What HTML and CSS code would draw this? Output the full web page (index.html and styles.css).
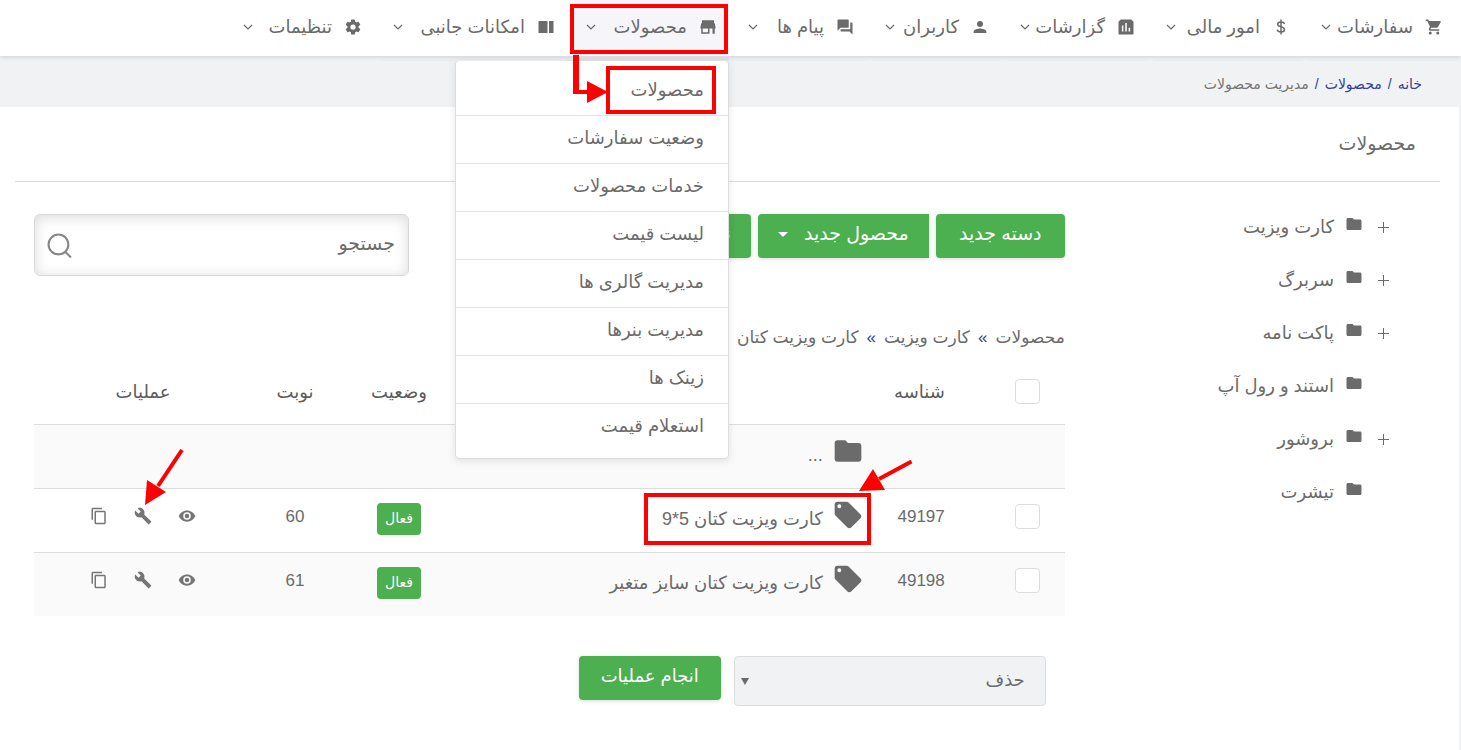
FILE: index.html
```html
<!DOCTYPE html>
<html lang="fa" dir="rtl">
<head>
<meta charset="utf-8">
<meta name="viewport" content="width=device-width, initial-scale=1">
<title>مدیریت محصولات</title>
<link rel="stylesheet" href="styles.css">
</head>
<body>
<svg class="sprite" aria-hidden="true">
  <symbol id="i-cart" viewBox="0 0 24 24"><path d="M7 18a2 2 0 1 0 0 4 2 2 0 0 0 0-4zM17 18a2 2 0 1 0 0 4 2 2 0 0 0 0-4zM7.200 14.600l.9-1.600h7.450c.75 0 1.400-.4 1.750-1l3.600-6.500A1 1 0 0 0 20 4H5.200l-.9-2H1v2h2l3.600 7.600-1.350 2.400C4.500 15.400 5.500 17 7 17h12v-2H7.400z"/></symbol>
  <symbol id="i-dollar" viewBox="0 0 24 24"><path d="M12 2v20M16.500 8c-.3-1.800-2-2.800-4.500-2.800S7.500 6.400 7.500 8.300c0 4.200 9.200 2.700 9.200 7.100 0 2-1.900 3.300-4.700 3.300s-4.700-1.200-5-3.200" fill="none" stroke="currentColor" stroke-width="2"/></symbol>
  <symbol id="i-chart" viewBox="0 0 24 24"><path fill-rule="evenodd" d="M5 2h14l3 3v16a1 1 0 0 1-1 1H3a1 1 0 0 1-1-1V5zM6.500 10v8h2v-8zM11 6.500V18h2V6.500zM15.500 13v5h2v-5z"/></symbol>
  <symbol id="i-user" viewBox="0 0 24 24"><path d="M12 12a4 4 0 1 0 0-8 4 4 0 0 0 0 8zm0 2c-3 0-8.500 1.300-8.500 4.500V20h17v-1.500C20.500 15.300 15 14 12 14z"/></symbol>
  <symbol id="i-chat" viewBox="0 0 24 24"><path d="M21 6h-2v9H6v2c0 .55.45 1 1 1h11l4 4V7c0-.55-.45-1-1-1zm-4 6V3c0-.55-.45-1-1-1H3c-.55 0-1 .45-1 1v14l4-4h10c.55 0 1-.45 1-1z"/></symbol>
  <symbol id="i-store" viewBox="0 0 24 24"><path d="M20 3H4v4h16V3zm2 11v-2l-1-5H3l-1 5v2h1v7h11v-7h4v7h3v-7h1zm-10 5H5v-5h7v5z"/></symbol>
  <symbol id="i-columns" viewBox="0 0 24 24"><path d="M2 4h12v16H2zM16 4h6v16h-6z"/></symbol>
  <symbol id="i-gear" viewBox="0 0 24 24"><path d="M19.430 12.980c.04-.32.070-.64.070-.98s-.03-.66-.07-.98l2.110-1.650c.19-.15.240-.42.120-.64l-2-3.460c-.12-.22-.39-.3-.61-.22l-2.490 1c-.52-.4-1.080-.73-1.690-.98l-.38-2.650C14.460 2.180 14.250 2 14 2h-4c-.25 0-.46.18-.49.42l-.38 2.650c-.61.25-1.170.59-1.690.98l-2.490-1c-.23-.09-.49 0-.61.22l-2 3.460c-.13.22-.07.49.12.64l2.110 1.650c-.04.32-.07.65-.07.98s.03.66.07.98l-2.110 1.650c-.19.15-.24.42-.12.64l2 3.460c.12.22.39.3.61.22l2.490-1c.52.4 1.080.73 1.690.98l.38 2.650c.03.24.24.42.49.42h4c.25 0 .46-.18.49-.42l.38-2.650c.61-.25 1.170-.59 1.690-.98l2.490 1c.23.09.49 0 .61-.22l2-3.460c.12-.22.07-.49-.12-.64l-2.110-1.650zM12 15.500a3.500 3.500 0 1 1 0-7 3.500 3.500 0 0 1 0 7z"/></symbol>
  <symbol id="i-chevron" viewBox="0 0 10 10"><path d="M1 3l4 4 4-4" fill="none" stroke="currentColor" stroke-width="1.200"/></symbol>
  <symbol id="i-folder" viewBox="0 0 24 24"><path d="M10 4H4c-1.100 0-2 .9-2 2v12c0 1.100.9 2 2 2h16c1.100 0 2-.9 2-2V8c0-1.100-.9-2-2-2h-8z"/></symbol>
  <symbol id="i-tag" viewBox="0 0 24 24"><path d="M21.410 11.580l-9-9C12.050 2.220 11.550 2 11 2H4c-1.100 0-2 .9-2 2v7c0 .55.22 1.050.59 1.420l9 9c.36.36.86.58 1.410.58s1.050-.22 1.410-.59l7-7c.37-.36.59-.86.59-1.410s-.23-1.060-.59-1.420zM5.500 7a1.500 1.500 0 1 1 0-3 1.500 1.500 0 0 1 0 3z"/></symbol>
  <symbol id="i-eye" viewBox="0 0 24 24"><path d="M12 4.500C7 4.500 2.730 7.610 1 12c1.730 4.390 6 7.500 11 7.500s9.270-3.110 11-7.500c-1.730-4.390-6-7.500-11-7.500zM12 17a5 5 0 1 1 0-10 5 5 0 0 1 0 10zm0-8a3 3 0 1 0 0 6 3 3 0 0 0 0-6z"/></symbol>
  <symbol id="i-wrench" viewBox="0 0 24 24"><path d="M22.700 19l-9.100-9.100c.9-2.300.4-5-1.500-6.900-2-2-5-2.400-7.400-1.300L9 6 6 9 1.600 4.700C.4 7.100.9 10.100 2.900 12.100c1.900 1.900 4.600 2.400 6.900 1.500l9.100 9.100c.4.400 1 .4 1.400 0l2.300-2.300c.5-.4.5-1.100.1-1.400z"/></symbol>
  <symbol id="i-copy" viewBox="0 0 24 24"><path d="M16 1H4c-1.100 0-2 .9-2 2v14h2V3h12V1zm3 4H8c-1.100 0-2 .9-2 2v14c0 1.100.9 2 2 2h11c1.100 0 2-.9 2-2V7c0-1.100-.9-2-2-2zm0 16H8V7h11v14z"/></symbol>
</svg>

<header class="topbar">
  <nav>
    <ul class="nav">
      <li class="nav-item w-orders"><a href="#"><svg class="icon"><use href="#i-cart"/></svg><span>سفارشات</span><svg class="chevron"><use href="#i-chevron"/></svg></a></li>
      <li class="nav-item w-finance"><a href="#"><svg class="icon"><use href="#i-dollar"/></svg><span>امور مالی</span><svg class="chevron"><use href="#i-chevron"/></svg></a></li>
      <li class="nav-item w-reports"><a href="#"><svg class="icon"><use href="#i-chart"/></svg><span>گزارشات</span><svg class="chevron"><use href="#i-chevron"/></svg></a></li>
      <li class="nav-item w-users"><a href="#"><svg class="icon"><use href="#i-user"/></svg><span>کاربران</span><svg class="chevron"><use href="#i-chevron"/></svg></a></li>
      <li class="nav-item w-messages"><a href="#"><svg class="icon"><use href="#i-chat"/></svg><span>پیام ها</span><svg class="chevron"><use href="#i-chevron"/></svg></a></li>
      <li class="nav-item w-products open"><a href="#"><svg class="icon"><use href="#i-store"/></svg><span>محصولات</span><svg class="chevron"><use href="#i-chevron"/></svg></a>
        <i class="ring ring-nav"></i>
        <ul class="menu">
          <li><a href="#">محصولات</a><i class="ring ring-menu"></i>
            <svg class="elbow" viewBox="0 0 36 56"><path d="M0 0h6v35h8v-9l21 11-21 11v-9H0z" fill="#f00"/></svg></li>
          <li><a href="#">وضعیت سفارشات</a></li>
          <li><a href="#">خدمات محصولات</a></li>
          <li><a href="#">لیست قیمت</a></li>
          <li><a href="#">مدیریت گالری ها</a></li>
          <li><a href="#">مدیریت بنرها</a></li>
          <li><a href="#">زینک ها</a></li>
          <li><a href="#">استعلام قیمت</a></li>
        </ul>
      </li>
      <li class="nav-item w-extras"><a href="#"><svg class="icon"><use href="#i-columns"/></svg><span>امکانات جانبی</span><svg class="chevron"><use href="#i-chevron"/></svg></a></li>
      <li class="nav-item w-settings"><a href="#"><svg class="icon"><use href="#i-gear"/></svg><span>تنظیمات</span><svg class="chevron"><use href="#i-chevron"/></svg></a></li>
    </ul>
  </nav>
</header>

<nav class="crumbs"><a href="#">خانه</a><b>/</b><a href="#">محصولات</a><b>/</b><span>مدیریت محصولات</span></nav>

<main class="page">
  <h1>محصولات</h1>
  <div class="columns">
    <aside>
      <ul class="tree">
        <li><button type="button" aria-label="باز کردن" class="plus"></button><svg class="icon"><use href="#i-folder"/></svg><a href="#">کارت ویزیت</a></li>
        <li><button type="button" aria-label="باز کردن" class="plus"></button><svg class="icon"><use href="#i-folder"/></svg><a href="#">سربرگ</a></li>
        <li><button type="button" aria-label="باز کردن" class="plus"></button><svg class="icon"><use href="#i-folder"/></svg><a href="#">پاکت نامه</a></li>
        <li><span class="no-plus"></span><svg class="icon"><use href="#i-folder"/></svg><a href="#">استند و رول آپ</a></li>
        <li><button type="button" aria-label="باز کردن" class="plus"></button><svg class="icon"><use href="#i-folder"/></svg><a href="#">بروشور</a></li>
        <li><span class="no-plus"></span><svg class="icon"><use href="#i-folder"/></svg><a href="#">تیشرت</a></li>
      </ul>
    </aside>
    <section class="content">
      <div class="tools">
        <div class="buttons">
          <button type="button" class="btn b-category">دسته جدید</button>
          <button type="button" class="btn split">محصول جدید<span class="caret"></span></button>
          <button type="button" class="btn">نو</button>
        </div>
        <label class="search">
          <input type="search" placeholder="جستجو" aria-label="جستجو">
          <svg viewBox="0 0 24 24"><circle cx="11" cy="11" r="9.500"/><path d="M17.500 18l5.500 5.500"/></svg>
        </label>
      </div>
      <nav class="path"><a href="#">محصولات</a><b>»</b><a href="#">کارت ویزیت</a><b>»</b><a href="#">کارت ویزیت کتان</a></nav>
      <table>
        <colgroup><col class="c-check"><col class="c-id"><col><col class="c-status"><col class="c-order"><col class="c-ops"></colgroup>
        <thead>
          <tr><th class="check"><input type="checkbox" aria-label="انتخاب همه"></th><th class="id">شناسه</th><th></th><th>وضعیت</th><th>نوبت</th><th class="ops">عملیات</th></tr>
        </thead>
        <tbody>
          <tr><td></td><td></td><td class="name"><div class="title"><svg><use href="#i-folder"/></svg><a href="#">...</a></div></td><td></td><td></td><td></td></tr>
          <tr><td class="check"><input type="checkbox" aria-label="49197"></td><td class="id">49197</td>
            <td class="name"><div class="title"><svg><use href="#i-tag"/></svg><a href="#">کارت ویزیت کتان 5*9</a><i class="ring ring-name"></i>
              <svg class="arrow arrow-name" viewBox="0 0 56 34"><path d="M52.500 1.500L20 19" stroke="#f00" stroke-width="4"/><path d="M0 31l14-22 12 21z" fill="#f00"/></svg></div></td>
            <td class="status"><button type="button" class="badge">فعال</button></td><td class="num">60</td>
            <td class="ops"><div class="actions"><button type="button" aria-label="نمایش"><svg class="icon"><use href="#i-eye"/></svg></button><button type="button" aria-label="ویرایش"><svg class="icon"><use href="#i-wrench"/></svg></button><button type="button" aria-label="کپی"><svg class="icon"><use href="#i-copy"/></svg></button>
              <svg class="arrow arrow-ops" viewBox="0 0 40 56"><path d="M37 1L13 37" stroke="#f00" stroke-width="4"/><path d="M0 56l2-25 19 12z" fill="#f00"/></svg></div></td></tr>
          <tr><td class="check"><input type="checkbox" aria-label="49198"></td><td class="id">49198</td>
            <td class="name"><div class="title"><svg><use href="#i-tag"/></svg><a href="#">کارت ویزیت کتان سایز متغیر</a></div></td>
            <td class="status"><button type="button" class="badge">فعال</button></td><td class="num">61</td>
            <td class="ops"><div class="actions"><button type="button" aria-label="نمایش"><svg class="icon"><use href="#i-eye"/></svg></button><button type="button" aria-label="ویرایش"><svg class="icon"><use href="#i-wrench"/></svg></button><button type="button" aria-label="کپی"><svg class="icon"><use href="#i-copy"/></svg></button></div></td></tr>
        </tbody>
      </table>
      <div class="bulk">
        <div class="select"><select aria-label="عملیات گروهی"><option>حذف</option></select></div>
        <button type="button" class="btn b-run">انجام عملیات</button>
      </div>
    </section>
  </div>
</main>
</body>
</html>
```
FILE: styles.css
```css
* { box-sizing: border-box; }
body { margin: 0; background: #f1f2f4; color: #6b6b6b; font: 18px/24px "Liberation Sans", "DejaVu Sans", sans-serif; }
a { color: inherit; text-decoration: none; }
ul { list-style: none; margin: 0; padding: 0; }
svg { fill: currentColor; flex: none; display: block; }
button, input, select { font: inherit; color: inherit; }
.sprite { position: absolute; width: 0; height: 0; }
.icon { width: 18px; height: 18px; }
.chevron { width: 10px; height: 10px; margin-right: auto; }

.topbar { height: 56px; background: #fff; box-shadow: 0 1px 5px rgba(0, 0, 0, .15); position: relative; z-index: 2; }
.nav { display: flex; gap: 7px; padding-right: 6px; }
.nav-item { height: 61px; border-bottom: 1px solid #e9eaec; position: relative; flex: none; }
.nav-item > a { display: flex; align-items: center; height: 53px; padding: 0 12px; }
.nav-item > a span { margin-right: 12px; white-space: nowrap; }
.w-orders { width: 146px; }
.w-finance { width: 148px; }
.w-reports { width: 139px; }
.w-users { width: 128px; }
.w-messages { width: 130px; }
.w-products { width: 155px; }
.w-extras { width: 186px; }
.w-settings { width: 143px; border-bottom: 0; }
.open { background: linear-gradient(#f5f5fa 56px, #dedee4 56px); }
.menu { position: absolute; top: 60px; right: 0; width: 274px; padding: 7px 0; background: #fff; border: 1px solid #ddd; border-radius: 4px; box-shadow: 0 2px 8px rgba(0, 0, 0, .1); }
.menu li { position: relative; border-bottom: 1px solid #e4e4e4; }
.menu li:last-child { border-bottom: 0; }
.menu a { display: block; padding: 10px 24px 13px; }

.ring { position: absolute; border: 4px solid #f00; pointer-events: none; }
.ring-nav { top: 4px; left: -4px; width: 158px; height: 50px; }
.ring-menu { top: -2px; right: 12px; width: 110px; height: 48px; }
.elbow { position: absolute; top: -13px; right: 119px; width: 36px; height: 56px; }
.arrow { position: absolute; pointer-events: none; }

.crumbs { display: flex; height: 51px; align-items: center; padding: 4px 39px 0 0; font-size: 14px; color: #757575; }
.crumbs a, .crumbs b { color: #303f9f; font-weight: normal; }
.crumbs b { margin: 0 6px; }

.page { background: #fff; margin-right: 2px; padding: 0 19px 44px 15px; }
h1 { margin: 0; padding: 25px 24px 0 0; height: 75px; font-size: 19px; font-weight: normal; line-height: 24px; border-bottom: 1px solid #ddd; }
.columns { display: grid; grid-template-columns: 1fr 3fr; padding-top: 32px; }
.tree { padding: 1px 50px 0 0; }
.tree li { display: flex; align-items: flex-start; height: 53px; }
.tree a { margin-right: 11px; }
.plus, .no-plus { width: 13px; height: 26px; margin-left: 14px; padding: 0; border: 0; background: linear-gradient(#6b6b6b, #6b6b6b) center 12px / 11px 1px no-repeat, linear-gradient(#6b6b6b, #6b6b6b) center 7px / 1px 11px no-repeat; }
.no-plus { background: none; }

.content { padding: 0 19px; min-width: 0; }
.tools { display: flex; justify-content: space-between; align-items: flex-start; }
.buttons, .bulk { display: flex; gap: 7px; align-items: flex-start; }
.btn { height: 44px; padding: 0 20px 4px; border: 0; border-radius: 4px; background: #4caf50; color: #fff; font-size: 19px; box-shadow: 0 1px 4px rgba(0, 0, 0, .15); white-space: nowrap; }
.b-category { min-width: 129px; }
.b-run { min-width: 142px; padding: 0 18px 4px; font-size: 18px; }
.split { display: flex; align-items: center; justify-content: space-between; min-width: 171px; border-radius: 4px 0 0 4px; }
.caret { border: 5px solid transparent; border-top-color: #fff; border-bottom: 0; }
.search { position: relative; width: 375px; }
.search input { display: block; width: 100%; height: 62px; padding: 0 13px 2px 45px; border: 1px solid #d8d8d8; border-radius: 6px; background: #fff; box-shadow: inset 0 2px 14px rgba(0, 0, 0, .15); outline: 0; font-size: 19px; }
.search input::placeholder { color: #6b6b6b; opacity: 1; }
.search svg { position: absolute; left: 13px; top: 19px; width: 25px; height: 25px; fill: none; stroke: #888; stroke-width: 2; }
.path { display: flex; padding-top: 50px; height: 84px; font-size: 17px; }
.path b { margin: 0 8px; color: #303f9f; font-weight: normal; }

table { width: 100%; border-collapse: collapse; table-layout: fixed; }
.c-check { width: 108px; }
.c-id { width: 84px; }
.c-status { width: 84px; }
.c-order { width: 124px; }
.c-ops { width: 199px; }
th, td { height: 64px; padding: 0; font-weight: normal; text-align: center; }
th { color: #5c5c5c; }
td { border-top: 1px solid #ddd; padding-bottom: 8px; }
tbody tr:nth-child(odd) { background: #fafafa; }
.check { text-align: right; padding-right: 25px; }
.id { text-align: right; padding-right: 12px; }
td.id, .num { font-size: 17px; padding-bottom: 6px; }
.ops { padding-left: 19px; }
td.status { padding-bottom: 2px; }
td.name { padding-bottom: 11px; }
.check input { appearance: none; display: block; width: 25px; height: 25px; margin: 0; border: 1px solid #ddd; border-radius: 4px; background: #fff; }
.title { position: relative; display: flex; align-items: center; gap: 9px; padding-right: 9px; white-space: nowrap; }
.title > svg:first-child { width: 32px; height: 32px; }
.title a { padding-top: 8px; }
.ring-name { top: -6px; right: 2px; width: 227px; height: 52px; }
.arrow-name { right: -42px; top: -39px; width: 56px; height: 34px; }
.badge { height: 32px; padding: 0 8px 2px; border: 0; border-radius: 4px; background: #4caf50; color: #fff; font-size: 14px; }
.actions { position: relative; display: flex; justify-content: center; gap: 26px; }
.actions button { padding: 0; border: 0; background: none; color: #757575; }
.arrow-ops { left: 92px; top: -58px; width: 40px; height: 56px; }

.bulk { padding: 40px 19px 0 0; gap: 13px; }
.select { position: relative; width: 312px; }
.select::after { content: ""; position: absolute; left: 7px; top: 22px; border: 4px solid transparent; border-top: 7px solid #6b6b6b; border-bottom: 0; pointer-events: none; }
select { appearance: none; display: block; width: 100%; height: 50px; padding: 0 20px 2px; border: 1px solid #ddd; border-radius: 4px; background: #f1f2f4; }
```
